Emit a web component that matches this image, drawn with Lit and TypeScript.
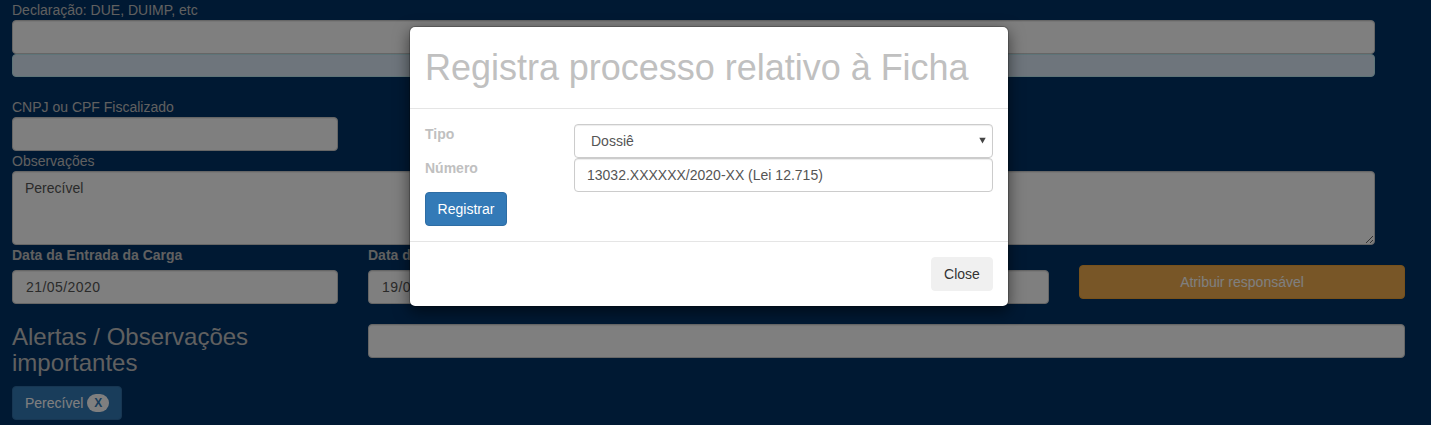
import { LitElement, html, css } from "lit";
import { customElement } from "lit/decorators.js";

@customElement("app-root")
export class AppRoot extends LitElement {
  static styles = css`
    :host {
      display: block;
      position: relative;
      height: 425px;
      overflow: hidden;
      background: #003366;
      color: #c0c0c0;
      font: 14px/20px "Liberation Sans", Arial, sans-serif;
    }
    *, *::before, *::after { box-sizing: border-box; }
    .page { padding: 0 26px 0 12px; display: flex; flex-direction: column; }
    .text { height: 20px; }
    .control {
      display: block;
      width: 100%;
      height: 34px;
      margin: 0;
      padding: 6px 12px;
      font: inherit;
      color: #555;
      background: #fff;
      border: 1px solid #ccc;
      border-radius: 4px;
      box-shadow: inset 0 1px 1px rgba(0, 0, 0, 0.075);
      outline: none;
    }
    textarea.control { height: 74px; resize: vertical; }
    .date { letter-spacing: 0.45px; padding-left: 13px; }
    .list {
      height: 23px;
      background: #dcebf8;
      border: 1px solid #bce8f1;
      border-radius: 4px;
      margin-bottom: 20px;
    }
    .page > .wide { width: 1363px; }
    .page > .narrow { width: 326px; }
    .bold { height: 20px; margin-bottom: 5px; font-weight: 700; }
    .grid { display: grid; grid-template-columns: 326px 326px 325px 326px; column-gap: 30px; }
    .assign { padding-top: 20px; }
    .btn {
      display: block;
      height: 34px;
      margin: 0;
      padding: 6px 12px;
      font: inherit;
      color: #fff;
      background: #337ab7;
      border: 1px solid #2e6da4;
      border-radius: 4px;
      white-space: nowrap;
    }
    .warning { width: 100%; background: #f0ad4e; border-color: #eea236; }
    .alerts { display: grid; grid-template-columns: 326px 1037px; column-gap: 30px; margin-top: 20px; }
    h3 { margin: 0 0 9px; font-size: 24px; line-height: 26.4px; }
    .badge {
      display: inline-block;
      min-width: 10px;
      padding: 3px 7px;
      font-size: 12px;
      font-weight: 700;
      line-height: 12px;
      color: #337ab7;
      background: #fff;
      border-radius: 10px;
      vertical-align: middle;
      position: relative;
      top: -1px;
    }
    h3, h1 { font-weight: 400; }
    .backdrop { position: absolute; inset: 0; background: rgba(0, 0, 0, 0.5); }
    .modal {
      position: absolute;
      left: 409px;
      top: 26px;
      width: 600px;
      background: #fff;
      background-clip: padding-box;
      border: 1px solid rgba(0, 0, 0, 0.2);
      border-radius: 6px;
      box-shadow: 0 5px 15px rgba(0, 0, 0, 0.5);
    }
    .head { height: 82px; padding: 21px 15px 0; border-bottom: 1px solid #e5e5e5; }
    h1 { margin: 0; font-size: 36px; line-height: 40px; white-space: nowrap; letter-spacing: -0.02px; }
    .body { padding: 15px; }
    .field { display: grid; grid-template-columns: 149px 419px; height: 34px; }
    .label { font-weight: 700; }
    .select { display: flex; justify-content: space-between; padding: 6px 6px 6px 16px; }
    .arrow { width: 7px; height: 7px; margin-top: 6px; }
    .foot { display: flex; justify-content: flex-end; padding: 15px; border-top: 1px solid #e5e5e5; }
    .register { width: 82px; padding: 6px 11px; }
    .close { width: 62px; padding: 6px 11px; color: #333; background: #f0f0f0; border-color: #f0f0f0; }
  `;

  render() {
    return html`
      <div class="page">
        <div class="text">Declaração: DUE, DUIMP, etc</div>
        <input class="control wide" />
        <div class="list wide"></div>
        <div class="text">CNPJ ou CPF Fiscalizado</div>
        <input class="control narrow" />
        <div class="text">Observações</div>
        <textarea class="control wide" .value=${"Perecível"}></textarea>
        <div class="grid">
          <div><div class="bold">Data da Entrada da Carga</div><input class="control date" value="21/05/2020" /></div>
          <div><div class="bold">Data da</div><input class="control date" value="19/05/2020" /></div>
          <div><div class="bold"></div><input class="control" /></div>
          <div class="assign"><button class="btn warning">Atribuir responsável</button></div>
        </div>
        <div class="alerts">
          <div>
            <h3>Alertas / Observações importantes</h3>
            <button class="btn">Perecível <span class="badge">X</span></button>
          </div>
          <input class="control" />
        </div>
      </div>
      <div class="backdrop"></div>
      <div class="modal" role="dialog">
        <div class="head"><h1>Registra processo relativo à Ficha</h1></div>
        <div class="body">
          <div class="field">
            <div class="label">Tipo</div>
            <div class="control select">
              <span>Dossiê</span>
              <svg class="arrow" viewBox="0 0 7 7"><path d="M0.3 0.8H6.7L3.5 6.6Z" fill="#444" /></svg>
            </div>
          </div>
          <div class="field">
            <div class="label">Número</div>
            <input class="control" value="13032.XXXXXX/2020-XX (Lei 12.715)" />
          </div>
          <button class="btn register">Registrar</button>
        </div>
        <div class="foot"><button class="btn close">Close</button></div>
      </div>
    `;
  }
}
